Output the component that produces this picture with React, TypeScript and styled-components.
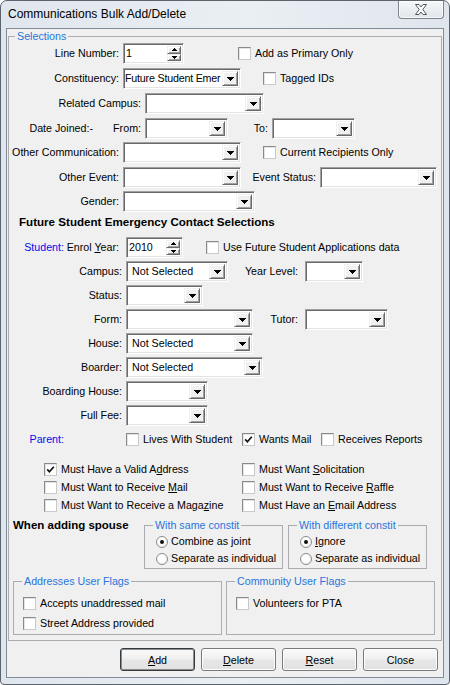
import React from "react";
import styled, { createGlobalStyle } from "styled-components";

const GlobalStyle = createGlobalStyle`
  html, body { margin: 0; padding: 0; background: #ffffff; }
  #root { width: 450px; height: 685px; }
  body {
    font-family: "Liberation Sans", Arial, Helvetica, sans-serif;
    font-size: 10.7px;
    color: #000;
  }
  *, *::before, *::after { box-sizing: border-box; }
`;

const Window = styled.div`
  width: 450px;
  height: 685px;
  display: flex;
  flex-direction: column;
  padding: 0 5px 6px;
  border: 1px solid #5b636d;
  border-radius: 7px 7px 4px 4px;
  background: linear-gradient(90deg, #e0e6ed 0%, #eaeff4 55%, #dfe5ec 100%);
  overflow: hidden;
`;

const TitleBar = styled.div`
  height: 27px;
  flex-shrink: 0;
  display: flex;
  align-items: flex-start;
  justify-content: space-between;
  padding-left: 2px;
`;

const TitleText = styled.div`
  margin-top: 6px;
  font-size: 12px;
  line-height: 15px;
  color: #000;
  white-space: nowrap;
`;

const CloseButton = styled.div`
  width: 46px;
  height: 18px;
  display: flex;
  align-items: center;
  justify-content: center;
  border: 1px solid #7d848c;
  border-top: none;
  border-radius: 0 0 4px 4px;
  background: linear-gradient(180deg, #f5f7f9, #e1e6eb);
  box-shadow: inset 0 0 0 1px rgba(255, 255, 255, 0.7);
`;

const Client = styled.div`
  flex: 1;
  min-height: 0;
  display: flex;
  flex-direction: column;
  border: 1px solid #838b95;
  background: #f0f0f0;
`;

const GroupBox = styled.fieldset<{ $w?: number; $m?: string }>`
  margin: ${(p) => p.$m ?? "0"};
  padding: 0;
  min-width: 0;
  flex-shrink: 0;
  width: ${(p) => (p.$w ? `${p.$w}px` : "auto")};
  border: 1px solid #a9adb2;
`;

const Caption = styled.legend<{ $ml?: number }>`
  margin-left: ${(p) => p.$ml ?? 8}px;
  padding: 0 2px;
  height: 13px;
  line-height: 13px;
  font-size: 10.7px;
  color: #2a74dc;
  white-space: nowrap;
`;

const GroupBody = styled.div<{ $pad: string }>`
  display: flex;
  flex-direction: column;
  padding: ${(p) => p.$pad};
`;

const Row = styled.div<{ $h?: number; $mt?: number }>`
  display: flex;
  align-items: center;
  flex-shrink: 0;
  height: ${(p) => p.$h ?? 21}px;
  margin-top: ${(p) => p.$mt ?? 0}px;
`;

const Label = styled.span<{ $w: number; $ml?: number; $blue?: boolean }>`
  flex-shrink: 0;
  width: ${(p) => p.$w}px;
  margin-left: ${(p) => p.$ml ?? 0}px;
  text-align: right;
  white-space: nowrap;
  line-height: 13px;
  color: ${(p) => (p.$blue ? "#0a0aee" : "#000")};
`;

const Heading = styled.div<{ $mt: number; $pl: number }>`
  margin-top: ${(p) => p.$mt}px;
  padding-left: ${(p) => p.$pl}px;
  font-weight: bold;
  font-size: 11.6px;
  line-height: 14px;
  white-space: nowrap;
`;

const Sunken = styled.div<{ $w: number; $ml?: number }>`
  flex-shrink: 0;
  width: ${(p) => p.$w}px;
  height: 21px;
  margin-left: ${(p) => p.$ml ?? 0}px;
  display: flex;
  align-items: center;
  padding: 2px 2px 2px 0;
  background: #fff;
  border: 1px solid;
  border-color: #a0a0a0 #ffffff #ffffff #a0a0a0;
  box-shadow: inset 1px 1px 0 #696969, inset -1px -1px 0 #e3e3e3;
`;

const FieldText = styled.span<{ $pad: number; $tight?: boolean }>`
  flex: 1;
  min-width: 0;
  overflow: hidden;
  white-space: nowrap;
  padding-left: ${(p) => p.$pad}px;
  line-height: 15px;
  letter-spacing: ${(p) => (p.$tight ? "-0.2px" : "normal")};
`;

const RaisedButton = styled.span<{ $w: number; $h?: number }>`
  flex-shrink: 0;
  width: ${(p) => p.$w}px;
  height: ${(p) => (p.$h ? `${p.$h}px` : "100%")};
  display: flex;
  align-items: center;
  justify-content: center;
  background: #f0f0f0;
  border: 1px solid;
  border-color: #f0f0f0 #696969 #696969 #f0f0f0;
  box-shadow: inset 1px 1px 0 #ffffff, inset -1px -1px 0 #a0a0a0;
`;

const SpinColumn = styled.span`
  flex-shrink: 0;
  width: 14px;
  height: 100%;
  display: flex;
  flex-direction: column;
`;

const SpinHalf = styled(RaisedButton)`
  flex: 1;
  width: 100%;
  height: auto;
`;

const CheckItem = styled.label<{ $w?: number; $ml?: number }>`
  flex-shrink: 0;
  display: flex;
  align-items: center;
  width: ${(p) => (p.$w ? `${p.$w}px` : "auto")};
  margin-left: ${(p) => p.$ml ?? 0}px;
  white-space: nowrap;
`;

const Box = styled.span`
  flex-shrink: 0;
  width: 13px;
  height: 13px;
  display: flex;
  align-items: center;
  justify-content: center;
  background: #fff;
  border: 1px solid;
  border-color: #8a8a8a #c9c9c9 #c9c9c9 #8a8a8a;
  box-shadow: inset 1px 1px 0 #e4e4e4;
`;

const RadioCircle = styled.span`
  flex-shrink: 0;
  width: 12px;
  height: 12px;
  border-radius: 50%;
  display: flex;
  align-items: center;
  justify-content: center;
  background: radial-gradient(circle at 40% 40%, #ffffff 40%, #e6e6e6 100%);
  border: 1px solid #8c8c8c;
`;

const Dot = styled.span`
  width: 4px;
  height: 4px;
  border-radius: 50%;
  background: #111;
`;

const ItemText = styled.span<{ $gap?: number }>`
  margin-left: ${(p) => p.$gap ?? 4}px;
  line-height: 13px;
`;

const CheckGrid = styled.div<{ $mt: number; $pl: number }>`
  display: grid;
  grid-template-columns: 198px auto;
  grid-auto-rows: 18px;
  align-items: center;
  margin-top: ${(p) => p.$mt}px;
  padding-left: ${(p) => p.$pl}px;
`;

const SpouseRow = styled.div<{ $mt: number }>`
  display: flex;
  align-items: flex-start;
  gap: 5px;
  margin-top: ${(p) => p.$mt}px;
`;

const BoldLabel = styled.span<{ $w: number; $ml: number }>`
  flex-shrink: 0;
  width: ${(p) => p.$w}px;
  margin-left: ${(p) => p.$ml}px;
  margin-right: -5px;
  font-weight: bold;
  font-size: 11.5px;
  line-height: 13px;
  white-space: nowrap;
`;

const FlagsRow = styled.div<{ $mt: number }>`
  display: flex;
  gap: 4px;
  padding-left: 4px;
  margin-top: ${(p) => p.$mt}px;
`;

const ButtonBar = styled.div`
  display: flex;
  justify-content: flex-end;
  gap: 6px;
  margin-top: 7px;
  padding-right: 5px;
`;

const PushButton = styled.button<{ $default?: boolean }>`
  width: 75px;
  height: 23px;
  padding: 0;
  font-family: "Liberation Sans", Arial, sans-serif;
  font-size: 10.7px;
  color: #000;
  border-radius: 3px;
  border: 1px solid ${(p) => (p.$default ? "#333a40" : "#7a7a7a")};
  background: linear-gradient(180deg, #fafafa 0%, #f0f0f0 45%, #e6e6e6 55%, #e2e2e2 100%);
  box-shadow: ${(p) =>
    p.$default ? "inset 0 0 0 1px #8d8d8d" : "inset 0 0 0 1px #fdfdfd"};
`;

/* ---------- drawings ---------- */

const DownArrow = () => (
  <svg width="7" height="4" viewBox="0 0 7 4" shapeRendering="crispEdges">
    <path d="M0 0H7V1H6V2H5V3H4V4H3V3H2V2H1V1H0Z" fill="#000" />
  </svg>
);

const SpinUp = () => (
  <svg width="5" height="3" viewBox="0 0 5 3" shapeRendering="crispEdges">
    <path d="M2 0H3V1H4V2H5V3H0V2H1V1H2Z" fill="#000" />
  </svg>
);

const SpinDown = () => (
  <svg width="5" height="3" viewBox="0 0 5 3" shapeRendering="crispEdges">
    <path d="M0 0H5V1H4V2H3V3H2V2H1V1H0Z" fill="#000" />
  </svg>
);

const CheckMark = () => (
  <svg width="9" height="9" viewBox="0 0 9 9">
    <polyline points="1.2,4.4 3.4,6.8 7.8,1.8" fill="none" stroke="#111" strokeWidth="1.7" />
  </svg>
);

const CloseIcon = () => (
  <svg width="14" height="11" viewBox="0 0 14 11">
    <path
      d="M1.5 0.5H5L7 3L9 0.5H12.5L8.8 5.5L12.5 10.5H9L7 8L5 10.5H1.5L5.2 5.5Z"
      fill="#ffffff"
      stroke="#4e5660"
      strokeWidth="1"
      strokeLinejoin="round"
    />
  </svg>
);

/* ---------- controls ---------- */

function Combo({
  w,
  ml,
  text,
  pad = 2,
  tight,
}: {
  w: number;
  ml?: number;
  text?: string;
  pad?: number;
  tight?: boolean;
}) {
  return (
    <Sunken $w={w} $ml={ml}>
      <FieldText $pad={pad - 1} $tight={tight}>
        {text ?? ""}
      </FieldText>
      <RaisedButton $w={16}>
        <DownArrow />
      </RaisedButton>
    </Sunken>
  );
}

function Spin({ w, ml, value }: { w: number; ml?: number; value: string }) {
  return (
    <Sunken $w={w} $ml={ml}>
      <FieldText $pad={2}>{value}</FieldText>
      <SpinColumn>
        <SpinHalf $w={14}>
          <SpinUp />
        </SpinHalf>
        <SpinHalf $w={14}>
          <SpinDown />
        </SpinHalf>
      </SpinColumn>
    </Sunken>
  );
}

function Check({
  checked,
  w,
  ml,
  children,
}: {
  checked?: boolean;
  w?: number;
  ml?: number;
  children: React.ReactNode;
}) {
  return (
    <CheckItem $w={w} $ml={ml}>
      <Box>{checked ? <CheckMark /> : null}</Box>
      <ItemText>{children}</ItemText>
    </CheckItem>
  );
}

function Radio({ selected, children }: { selected?: boolean; children: React.ReactNode }) {
  return (
    <CheckItem>
      <RadioCircle>{selected ? <Dot /> : null}</RadioCircle>
      <ItemText $gap={3}>{children}</ItemText>
    </CheckItem>
  );
}

export default function App() {
  return (
    <>
      <GlobalStyle />
      <Window>
        <TitleBar>
          <TitleText>Communications Bulk Add/Delete</TitleText>
          <CloseButton aria-label="Close">
            <CloseIcon />
          </CloseButton>
        </TitleBar>
        <Client>
          <GroupBox $m="1px 1px 0">
            <Caption $ml={6}>Selections</Caption>
            <GroupBody $pad="0 0 5px 0">
              <Row>
                <Label $w={110}>Line Number:</Label>
                <Spin w={61} ml={4} value="1" />
                <Check ml={54}>Add as Primary Only</Check>
              </Row>
              <Row $mt={4}>
                <Label $w={110}>Constituency:</Label>
                <Combo w={118} ml={4} text="Future Student Emer" pad={2} tight />
                <Check ml={22}>Tagged IDs</Check>
              </Row>
              <Row $mt={4}>
                <Label $w={132}>Related Campus:</Label>
                <Combo w={119} ml={4} />
              </Row>
              <Row $mt={4}>
                <Label $w={84}>Date Joined:-</Label>
                <Label $w={48}>From:</Label>
                <Combo w={83} ml={4} />
                <Label $w={40}>To:</Label>
                <Combo w={83} ml={4} />
              </Row>
              <Row $mt={3}>
                <Label $w={110}>Other Communication:</Label>
                <Combo w={118} ml={4} />
                <Check ml={22}>Current Recipients Only</Check>
              </Row>
              <Row $mt={4}>
                <Label $w={110}>Other Event:</Label>
                <Combo w={118} ml={4} />
                <Label $w={75}>Event Status:</Label>
                <Combo w={117} ml={4} />
              </Row>
              <Row $mt={3}>
                <Label $w={110}>Gender:</Label>
                <Combo w={132} ml={4} />
              </Row>

              <Heading $mt={3} $pl={10}>
                Future Student Emergency Contact Selections
              </Heading>

              <Row $mt={8}>
                <Label $w={55} $blue>
                  Student:
                </Label>
                <Label $w={55}>
                  Enrol <u>Y</u>ear:
                </Label>
                <Spin w={57} ml={7} value="2010" />
                <Check ml={23}>Use Future Student Applications data</Check>
              </Row>
              <Row $mt={3}>
                <Label $w={113}>Campus:</Label>
                <Combo w={102} ml={4} text="Not Selected" pad={6} />
                <Label $w={70}>Year Level:</Label>
                <Combo w={58} ml={7} />
              </Row>
              <Row $mt={3}>
                <Label $w={113}>Status:</Label>
                <Combo w={77} ml={4} />
              </Row>
              <Row $mt={3}>
                <Label $w={113}>Form:</Label>
                <Combo w={127} ml={4} />
                <Label $w={45}>Tutor:</Label>
                <Combo w={83} ml={7} />
              </Row>
              <Row $mt={3}>
                <Label $w={113}>House:</Label>
                <Combo w={127} ml={4} text="Not Selected" pad={6} />
              </Row>
              <Row $mt={3}>
                <Label $w={113}>Boarder:</Label>
                <Combo w={137} ml={4} text="Not Selected" pad={6} />
              </Row>
              <Row $mt={3}>
                <Label $w={113}>Boarding House:</Label>
                <Combo w={82} ml={4} />
              </Row>
              <Row $mt={3}>
                <Label $w={113}>Full Fee:</Label>
                <Combo w={82} ml={4} />
              </Row>
              <Row $mt={3}>
                <Label $w={55} $blue>
                  Parent:
                </Label>
                <Check ml={62} w={116}>
                  Lives With Student
                </Check>
                <Check w={79} checked>
                  Wants Mail
                </Check>
                <Check>Receives Reports</Check>
              </Row>

              <CheckGrid $mt={10} $pl={35}>
                <Check checked>
                  Must Have a Valid A<u>d</u>dress
                </Check>
                <Check>
                  Must Want <u>S</u>olicitation
                </Check>
                <Check>
                  Must Want to Receive <u>M</u>ail
                </Check>
                <Check>
                  Must Want to Receive <u>R</u>affle
                </Check>
                <Check>
                  Must Want to Receive a Maga<u>z</u>ine
                </Check>
                <Check>
                  Must Have an <u>E</u>mail Address
                </Check>
              </CheckGrid>

              <SpouseRow $mt={5}>
                <BoldLabel $w={131} $ml={4}>
                  When adding spouse
                </BoldLabel>
                <GroupBox $w={139}>
                  <Caption>With same constit</Caption>
                  <GroupBody $pad="1px 0 1px 11px">
                    <Row $h={17}>
                      <Radio selected>Combine as joint</Radio>
                    </Row>
                    <Row $h={17}>
                      <Radio>Separate as individual</Radio>
                    </Row>
                  </GroupBody>
                </GroupBox>
                <GroupBox $w={139}>
                  <Caption>With different constit</Caption>
                  <GroupBody $pad="1px 0 1px 11px">
                    <Row $h={17}>
                      <Radio selected>
                        <u>I</u>gnore
                      </Radio>
                    </Row>
                    <Row $h={17}>
                      <Radio>Separate as individual</Radio>
                    </Row>
                  </GroupBody>
                </GroupBox>
              </SpouseRow>

              <FlagsRow $mt={6}>
                <GroupBox $w={209}>
                  <Caption>Addresses User Flags</Caption>
                  <GroupBody $pad="5px 0 1px 9px">
                    <Row $h={20}>
                      <Check>Accepts unaddressed mail</Check>
                    </Row>
                    <Row $h={20}>
                      <Check>Street Address provided</Check>
                    </Row>
                  </GroupBody>
                </GroupBox>
                <GroupBox $w={209}>
                  <Caption>Community User Flags</Caption>
                  <GroupBody $pad="5px 0 21px 9px">
                    <Row $h={20}>
                      <Check>Volunteers for PTA</Check>
                    </Row>
                  </GroupBody>
                </GroupBox>
              </FlagsRow>
            </GroupBody>
          </GroupBox>

          <ButtonBar>
            <PushButton $default>
              <u>A</u>dd
            </PushButton>
            <PushButton>
              <u>D</u>elete
            </PushButton>
            <PushButton>
              <u>R</u>eset
            </PushButton>
            <PushButton>Close</PushButton>
          </ButtonBar>
        </Client>
      </Window>
    </>
  );
}
